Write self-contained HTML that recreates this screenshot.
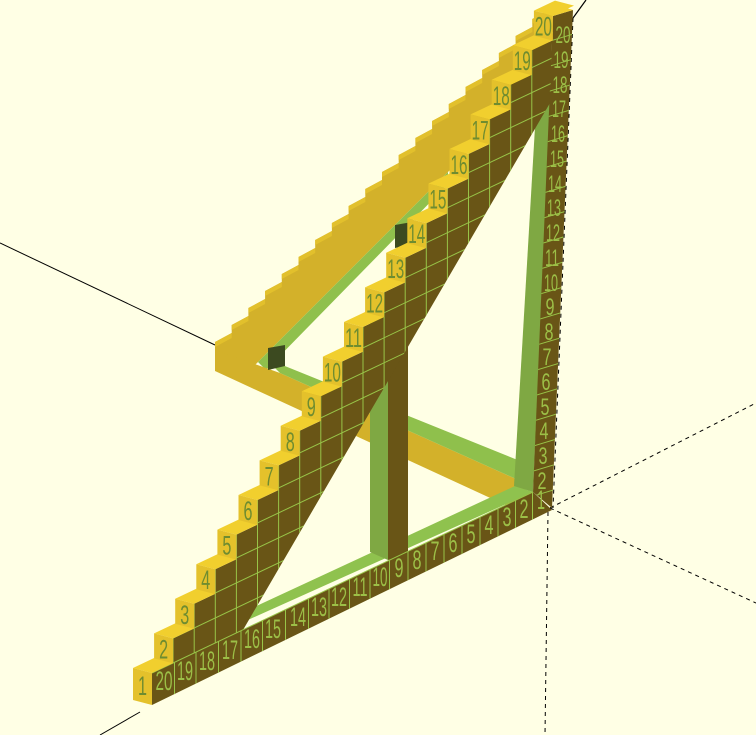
<!DOCTYPE html>
<html><head><meta charset="utf-8"><style>
html,body{margin:0;padding:0;background:#ffffe5;}
svg{display:block;}
text{font-family:"Liberation Sans",sans-serif;}
</style></head><body>
<svg width="756" height="735" viewBox="0 0 756 735" xmlns="http://www.w3.org/2000/svg">
<defs>
<g id="st">
<polygon points="0,0 21.1,-10 2.1,-15 -19,-5" fill="#f1cf2e"/>
<polygon points="0,0 0,25 -19,20 -19,-5" fill="#e4c12b"/>
</g>
<polygon id="bt" points="0,0 16.7,-9 16.7,-4 0,5" fill="#e2c02c"/>
<clipPath id="cs"><polygon points="152,673 173.1,663 173.1,638.4 194.2,628.4 194.2,603.8 215.3,593.8 215.3,569.2 236.4,559.2 236.4,534.6 257.5,524.6 257.5,500 278.6,490 278.6,465.4 299.7,455.4 299.7,430.8 320.8,420.8 320.8,396.2 341.9,386.2 341.9,361.6 363,351.6 363,327 384.1,317 384.1,292.4 405.2,282.4 405.2,257.8 426.3,247.8 426.3,223.2 447.4,213.2 447.4,188.6 468.5,178.6 468.5,154 489.6,144 489.6,119.4 510.7,109.4 510.7,84.8 531.8,74.8 531.8,50.2 552.9,40.2 552.9,15.6 550,103 243,630"/></clipPath>
<clipPath id="cb"><polygon points="152,673 533,492 552,510 152,705"/></clipPath>
<clipPath id="cc"><polygon points="553,16 573,10 552,508 533,492"/></clipPath>
</defs>

<line x1="0" y1="243" x2="215" y2="345" stroke="#000" stroke-width="1"/>
<line x1="100" y1="735" x2="140" y2="712" stroke="#000" stroke-width="1"/>
<line x1="586" y1="0" x2="573" y2="18" stroke="#000" stroke-width="1.2"/>
<g stroke="#000" stroke-width="1" stroke-dasharray="4,4" fill="none">
<line x1="550" y1="508" x2="756" y2="403"/>
<line x1="550" y1="508" x2="756" y2="603"/>
<line x1="548" y1="512" x2="545" y2="735"/>
<line x1="573" y1="18" x2="553" y2="508"/>
</g>

<polygon fill="#d3b12a" points="215,370 215,342 231.7,333 231.7,325 248.4,316 248.4,308 265.1,299 265.1,291 281.8,282 281.8,274 298.5,265 298.5,257 315.2,248 315.2,240 331.9,231 331.9,223 348.6,214 348.6,206 365.3,197 365.3,189 382,180 382,172 398.7,163 398.7,155 415.4,146 415.4,138 432.1,129 432.1,121 448.8,112 448.8,104 465.5,95 465.5,87 482.2,78 482.2,70 498.9,61 498.9,53 515.6,44 515.6,36 532.3,27 532.3,19 549,10 549,71 255,365"/>
<g>
<use href="#bt" x="215" y="342"/><use href="#bt" x="231.7" y="325"/><use href="#bt" x="248.4" y="308"/><use href="#bt" x="265.1" y="291"/><use href="#bt" x="281.8" y="274"/><use href="#bt" x="298.5" y="257"/><use href="#bt" x="315.2" y="240"/><use href="#bt" x="331.9" y="223"/><use href="#bt" x="348.6" y="206"/><use href="#bt" x="365.3" y="189"/><use href="#bt" x="382" y="172"/><use href="#bt" x="398.7" y="155"/><use href="#bt" x="415.4" y="138"/><use href="#bt" x="432.1" y="121"/><use href="#bt" x="448.8" y="104"/><use href="#bt" x="465.5" y="87"/><use href="#bt" x="482.2" y="70"/><use href="#bt" x="498.9" y="53"/><use href="#bt" x="515.6" y="36"/><use href="#bt" x="532.3" y="19"/>
</g>
<polygon fill="#8fc04c" points="258,362 448,172 448,184 266,370"/>
<polygon fill="#d3b12a" points="215,350 280,373 525,483 525,514 215,371"/>
<polygon fill="#8fc04c" points="265,358 525,463 525,483 280,373"/>
<polygon fill="#3c4a20" points="268,348 285,345 285,366 268,370"/>
<polygon fill="#3c4a20" points="395,225 412,222 412,245 395,248"/>

<polygon fill="#8fc24e" points="230,628 533,492 515,486 222,622"/>
<polygon fill="#7fa843" points="551,100 533,492 514,486 536,110"/>
<polygon fill="#7fa843" points="370,300 388,300 388,560 370,552"/>
<polygon fill="#695516" points="388,300 408,300 408,556 388,560"/>

<polygon fill="#695516" points="152,673 173.1,663 173.1,638.4 194.2,628.4 194.2,603.8 215.3,593.8 215.3,569.2 236.4,559.2 236.4,534.6 257.5,524.6 257.5,500 278.6,490 278.6,465.4 299.7,455.4 299.7,430.8 320.8,420.8 320.8,396.2 341.9,386.2 341.9,361.6 363,351.6 363,327 384.1,317 384.1,292.4 405.2,282.4 405.2,257.8 426.3,247.8 426.3,223.2 447.4,213.2 447.4,188.6 468.5,178.6 468.5,154 489.6,144 489.6,119.4 510.7,109.4 510.7,84.8 531.8,74.8 531.8,50.2 552.9,40.2 552.9,15.6 550,103 243,630"/>
<polygon fill="#695516" points="152,673 533,492 552,510 152,705"/>
<polygon fill="#695516" points="553,16 573,10 552,508 533,492"/>

<g stroke="#98c448" stroke-width="1" clip-path="url(#cs)">
<line x1="130" y1="658.5" x2="580" y2="444.7"/><line x1="130" y1="633.5" x2="580" y2="419.7"/><line x1="130" y1="608.5" x2="580" y2="394.7"/><line x1="130" y1="583.5" x2="580" y2="369.7"/><line x1="130" y1="558.5" x2="580" y2="344.7"/><line x1="130" y1="533.5" x2="580" y2="319.7"/><line x1="130" y1="508.5" x2="580" y2="294.7"/><line x1="130" y1="483.5" x2="580" y2="269.7"/><line x1="130" y1="458.5" x2="580" y2="244.7"/><line x1="130" y1="433.5" x2="580" y2="219.7"/><line x1="130" y1="408.5" x2="580" y2="194.7"/><line x1="130" y1="383.5" x2="580" y2="169.7"/><line x1="130" y1="358.5" x2="580" y2="144.7"/><line x1="130" y1="333.5" x2="580" y2="119.7"/><line x1="130" y1="308.5" x2="580" y2="94.7"/><line x1="130" y1="283.5" x2="580" y2="69.7"/><line x1="130" y1="258.5" x2="580" y2="44.7"/><line x1="130" y1="233.5" x2="580" y2="19.7"/>
<line x1="173.1" y1="0" x2="173.1" y2="735"/><line x1="194.2" y1="0" x2="194.2" y2="735"/><line x1="215.3" y1="0" x2="215.3" y2="735"/><line x1="236.4" y1="0" x2="236.4" y2="735"/><line x1="257.5" y1="0" x2="257.5" y2="735"/><line x1="278.6" y1="0" x2="278.6" y2="735"/><line x1="299.7" y1="0" x2="299.7" y2="735"/><line x1="320.8" y1="0" x2="320.8" y2="735"/><line x1="341.9" y1="0" x2="341.9" y2="735"/><line x1="363" y1="0" x2="363" y2="735"/><line x1="384.1" y1="0" x2="384.1" y2="735"/><line x1="405.2" y1="0" x2="405.2" y2="735"/><line x1="426.3" y1="0" x2="426.3" y2="735"/><line x1="447.4" y1="0" x2="447.4" y2="735"/><line x1="468.5" y1="0" x2="468.5" y2="735"/><line x1="489.6" y1="0" x2="489.6" y2="735"/><line x1="510.7" y1="0" x2="510.7" y2="735"/><line x1="531.8" y1="0" x2="531.8" y2="735"/>
</g>
<line x1="152" y1="673" x2="533" y2="492" stroke="#98c448" stroke-width="1"/>
<g stroke="#98c448" stroke-width="1" clip-path="url(#cb)">
<line x1="174.5" y1="400" x2="174.5" y2="735"/><line x1="196" y1="400" x2="196" y2="735"/><line x1="218.5" y1="400" x2="218.5" y2="735"/><line x1="241" y1="400" x2="241" y2="735"/><line x1="262.5" y1="400" x2="262.5" y2="735"/><line x1="285.5" y1="400" x2="285.5" y2="735"/><line x1="308.5" y1="400" x2="308.5" y2="735"/><line x1="329" y1="400" x2="329" y2="735"/><line x1="349.5" y1="400" x2="349.5" y2="735"/><line x1="370" y1="400" x2="370" y2="735"/><line x1="389.5" y1="400" x2="389.5" y2="735"/><line x1="408" y1="400" x2="408" y2="735"/><line x1="426" y1="400" x2="426" y2="735"/><line x1="444" y1="400" x2="444" y2="735"/><line x1="462" y1="400" x2="462" y2="735"/><line x1="480" y1="400" x2="480" y2="735"/><line x1="498" y1="400" x2="498" y2="735"/><line x1="515.5" y1="400" x2="515.5" y2="735"/><line x1="532.5" y1="400" x2="532.5" y2="735"/>
</g>
<g stroke="#98c448" stroke-width="1" clip-path="url(#cc)">
<line x1="530" y1="497" x2="580" y2="482"/><line x1="530" y1="472" x2="580" y2="457"/><line x1="530" y1="447" x2="580" y2="432"/><line x1="530" y1="422" x2="580" y2="407"/><line x1="530" y1="397" x2="580" y2="382"/><line x1="530" y1="372" x2="580" y2="357"/><line x1="530" y1="347" x2="580" y2="332"/><line x1="530" y1="322" x2="580" y2="307"/><line x1="530" y1="297" x2="580" y2="282"/><line x1="530" y1="272" x2="580" y2="257"/><line x1="530" y1="247" x2="580" y2="232"/><line x1="530" y1="222" x2="580" y2="207"/><line x1="530" y1="197" x2="580" y2="182"/><line x1="530" y1="172" x2="580" y2="157"/><line x1="530" y1="147" x2="580" y2="132"/><line x1="530" y1="122" x2="580" y2="107"/><line x1="530" y1="97" x2="580" y2="82"/><line x1="530" y1="72" x2="580" y2="57"/><line x1="530" y1="47" x2="580" y2="32"/>
</g>

<use href="#st" x="152" y="673"/><polygon points="152,695 152,705 133,700 133,690" fill="#e4c12b"/><use href="#st" x="173.1" y="638.4"/><use href="#st" x="194.2" y="603.8"/><use href="#st" x="215.3" y="569.2"/><use href="#st" x="236.4" y="534.6"/><use href="#st" x="257.5" y="500"/><use href="#st" x="278.6" y="465.4"/><use href="#st" x="299.7" y="430.8"/><use href="#st" x="320.8" y="396.2"/><use href="#st" x="341.9" y="361.6"/><use href="#st" x="363" y="327"/><use href="#st" x="384.1" y="292.4"/><use href="#st" x="405.2" y="257.8"/><use href="#st" x="426.3" y="223.2"/><use href="#st" x="447.4" y="188.6"/><use href="#st" x="468.5" y="154"/><use href="#st" x="489.6" y="119.4"/><use href="#st" x="510.7" y="84.8"/><use href="#st" x="531.8" y="50.2"/><use href="#st" x="552.9" y="15.6"/>
<polygon points="553,16 573,10 560,6 540,12" fill="#f1cf2e"/>

<g fill="#6e8c30" font-size="27" text-anchor="middle">
<text x="142.5" y="695" textLength="9" lengthAdjust="spacingAndGlyphs">1</text>
<text x="163.6" y="658.4" textLength="9" lengthAdjust="spacingAndGlyphs">2</text>
<text x="184.7" y="623.8" textLength="9" lengthAdjust="spacingAndGlyphs">3</text>
<text x="205.8" y="589.2" textLength="9" lengthAdjust="spacingAndGlyphs">4</text>
<text x="226.9" y="554.6" textLength="9" lengthAdjust="spacingAndGlyphs">5</text>
<text x="248" y="520" textLength="9" lengthAdjust="spacingAndGlyphs">6</text>
<text x="269.1" y="485.4" textLength="9" lengthAdjust="spacingAndGlyphs">7</text>
<text x="290.2" y="450.8" textLength="9" lengthAdjust="spacingAndGlyphs">8</text>
<text x="311.3" y="416.2" textLength="9" lengthAdjust="spacingAndGlyphs">9</text>
<text x="332.4" y="381.6" textLength="17" lengthAdjust="spacingAndGlyphs">10</text>
<text x="353.5" y="347" textLength="17" lengthAdjust="spacingAndGlyphs">11</text>
<text x="374.6" y="312.4" textLength="17" lengthAdjust="spacingAndGlyphs">12</text>
<text x="395.7" y="277.8" textLength="17" lengthAdjust="spacingAndGlyphs">13</text>
<text x="416.8" y="243.2" textLength="17" lengthAdjust="spacingAndGlyphs">14</text>
<text x="437.9" y="208.6" textLength="17" lengthAdjust="spacingAndGlyphs">15</text>
<text x="459" y="174" textLength="17" lengthAdjust="spacingAndGlyphs">16</text>
<text x="480.1" y="139.4" textLength="17" lengthAdjust="spacingAndGlyphs">17</text>
<text x="501.2" y="104.8" textLength="17" lengthAdjust="spacingAndGlyphs">18</text>
<text x="522.3" y="70.2" textLength="17" lengthAdjust="spacingAndGlyphs">19</text>
<text x="543.4" y="35.6" textLength="17" lengthAdjust="spacingAndGlyphs">20</text>
</g>

<g fill="#9cbf47" font-size="27" text-anchor="middle">
<text x="164" y="690" textLength="17" lengthAdjust="spacingAndGlyphs">20</text>
<text x="185" y="680" textLength="16" lengthAdjust="spacingAndGlyphs">19</text>
<text x="207" y="670" textLength="16" lengthAdjust="spacingAndGlyphs">18</text>
<text x="230" y="659" textLength="16" lengthAdjust="spacingAndGlyphs">17</text>
<text x="252" y="648" textLength="16" lengthAdjust="spacingAndGlyphs">16</text>
<text x="273" y="638" textLength="16" lengthAdjust="spacingAndGlyphs">15</text>
<text x="298" y="626" textLength="16" lengthAdjust="spacingAndGlyphs">14</text>
<text x="319" y="616" textLength="16" lengthAdjust="spacingAndGlyphs">13</text>
<text x="339" y="606" textLength="16" lengthAdjust="spacingAndGlyphs">12</text>
<text x="360" y="596" textLength="15" lengthAdjust="spacingAndGlyphs">11</text>
<text x="380" y="586" textLength="15" lengthAdjust="spacingAndGlyphs">10</text>
<text x="399" y="577" textLength="9" lengthAdjust="spacingAndGlyphs">9</text>
<text x="417" y="569" textLength="9" lengthAdjust="spacingAndGlyphs">8</text>
<text x="435" y="560" textLength="9" lengthAdjust="spacingAndGlyphs">7</text>
<text x="453" y="552" textLength="9" lengthAdjust="spacingAndGlyphs">6</text>
<text x="471" y="543" textLength="9" lengthAdjust="spacingAndGlyphs">5</text>
<text x="489" y="534" textLength="9" lengthAdjust="spacingAndGlyphs">4</text>
<text x="507" y="526" textLength="9" lengthAdjust="spacingAndGlyphs">3</text>
<text x="524" y="518" textLength="9" lengthAdjust="spacingAndGlyphs">2</text>
<text x="541" y="509" textLength="8" lengthAdjust="spacingAndGlyphs">1</text>
</g>

<g fill="#9cbf47" font-size="24" text-anchor="middle">
<text x="542" y="489" textLength="9" lengthAdjust="spacingAndGlyphs">2</text>
<text x="543" y="464" textLength="9" lengthAdjust="spacingAndGlyphs">3</text>
<text x="544" y="439" textLength="9" lengthAdjust="spacingAndGlyphs">4</text>
<text x="545" y="415" textLength="9" lengthAdjust="spacingAndGlyphs">5</text>
<text x="546" y="390" textLength="9" lengthAdjust="spacingAndGlyphs">6</text>
<text x="547" y="365" textLength="9" lengthAdjust="spacingAndGlyphs">7</text>
<text x="549" y="340" textLength="9" lengthAdjust="spacingAndGlyphs">8</text>
<text x="550" y="315" textLength="9" lengthAdjust="spacingAndGlyphs">9</text>
<text x="551" y="291" textLength="14" lengthAdjust="spacingAndGlyphs">10</text>
<text x="552" y="266" textLength="14" lengthAdjust="spacingAndGlyphs">11</text>
<text x="553" y="241" textLength="14" lengthAdjust="spacingAndGlyphs">12</text>
<text x="554" y="216" textLength="14" lengthAdjust="spacingAndGlyphs">13</text>
<text x="555" y="192" textLength="14" lengthAdjust="spacingAndGlyphs">14</text>
<text x="557" y="167" textLength="14" lengthAdjust="spacingAndGlyphs">15</text>
<text x="558" y="142" textLength="14" lengthAdjust="spacingAndGlyphs">16</text>
<text x="559" y="117" textLength="14" lengthAdjust="spacingAndGlyphs">17</text>
<text x="560" y="93" textLength="15" lengthAdjust="spacingAndGlyphs">18</text>
<text x="561" y="68" textLength="15" lengthAdjust="spacingAndGlyphs">19</text>
<text x="563" y="43" textLength="15" lengthAdjust="spacingAndGlyphs">20</text>
</g>
</svg>
</body></html>
